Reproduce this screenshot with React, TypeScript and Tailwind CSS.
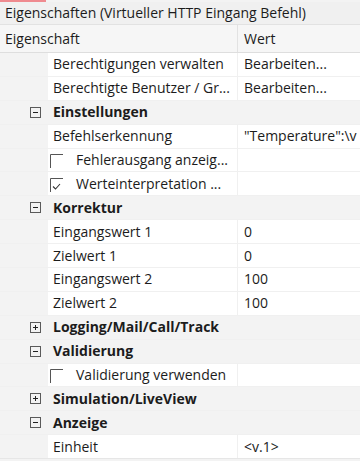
import React from 'react';

type Row =
  | { kind: 'cat'; label: string; open: boolean }
  | { kind: 'prop'; label: string; value?: string }
  | { kind: 'check'; label: string; checked: boolean };

const rows: Row[] = [
  { kind: 'prop', label: 'Berechtigungen verwalten', value: 'Bearbeiten...' },
  { kind: 'prop', label: 'Berechtigte Benutzer / Gr...', value: 'Bearbeiten...' },
  { kind: 'cat', label: 'Einstellungen', open: true },
  { kind: 'prop', label: 'Befehlserkennung', value: '"Temperature":\\v' },
  { kind: 'check', label: 'Fehlerausgang anzeig...', checked: false },
  { kind: 'check', label: 'Werteinterpretation ...', checked: true },
  { kind: 'cat', label: 'Korrektur', open: true },
  { kind: 'prop', label: 'Eingangswert 1', value: '0' },
  { kind: 'prop', label: 'Zielwert 1', value: '0' },
  { kind: 'prop', label: 'Eingangswert 2', value: '100' },
  { kind: 'prop', label: 'Zielwert 2', value: '100' },
  { kind: 'cat', label: 'Logging/Mail/Call/Track', open: false },
  { kind: 'cat', label: 'Validierung', open: true },
  { kind: 'check', label: 'Validierung verwenden', checked: false },
  { kind: 'cat', label: 'Simulation/LiveView', open: false },
  { kind: 'cat', label: 'Anzeige', open: true },
  { kind: 'prop', label: 'Einheit', value: '<v.1>' },
];

function ExpandBox({ open }: { open: boolean }) {
  return (
    <svg width="11" height="11" viewBox="0 0 11 11" className="shrink-0">
      <rect x="0.5" y="0.5" width="10" height="10" fill="none" stroke="#5a5a5a" />
      <path d="M3 5.5h5" stroke="#222" />
      {!open && <path d="M5.5 3v5" stroke="#222" />}
    </svg>
  );
}

function CheckCorner({ checked }: { checked: boolean }) {
  return (
    <svg width="14" height="14" viewBox="0 0 14 14" className="shrink-0">
      <path d="M0.5 14V0.5H13" fill="none" stroke="#555" />
      {checked && <path d="M3 8.5l2.5 2.5 4.5-5" fill="none" stroke="#333" strokeWidth="1.1" />}
    </svg>
  );
}

function PropertyRow({ row }: { row: Row }) {
  if (row.kind === 'cat') {
    return (
      <div className="flex h-[22.9px] items-center bg-[#f3f3f3]">
        <div className="flex w-[48px] justify-end pr-[7px]">
          <ExpandBox open={row.open} />
        </div>
        <span className="pl-[5px] font-bold">{row.label}</span>
      </div>
    );
  }
  return (
    <div className="flex h-[22.9px] items-center">
      <div className="h-full w-[48px] shrink-0 bg-[#f3f3f3]" />
      <div className="flex h-full w-[189px] shrink-0 items-center overflow-hidden whitespace-nowrap bg-white pl-[5px]">
        {row.kind === 'check' ? (
          <>
            <div className="-ml-[3px] mt-[2px] flex">
              <CheckCorner checked={row.checked} />
            </div>
            <span className="pl-[12px]">{row.label}</span>
          </>
        ) : (
          <span>{row.label}</span>
        )}
      </div>
      <div className="h-full w-px shrink-0 bg-[#f0f0f0]" />
      <div className="flex h-full flex-1 items-center overflow-hidden whitespace-nowrap bg-white pl-[6px]">
        {row.kind === 'prop' ? row.value : ''}
      </div>
    </div>
  );
}

export default function App() {
  return (
    <div
      className="h-[461px] w-[360px] overflow-hidden bg-[#f3f3f3] text-[14px] leading-none text-[#1c1c1c]"
      style={{ fontFamily: '"Open Sans", "Noto Sans", sans-serif' }}
    >
      <div className="h-[2px] w-[46px] bg-[#ef8a8f]" />
      <div className="flex h-[23px] items-center border-b border-[#e2e2e2] bg-[#f0f0f0] pl-[5px]">
        Eigenschaften (Virtueller HTTP Eingang Befehl)
      </div>
      <div className="flex h-[28px] border-b border-[#dedede] bg-[#f6f6f6]">
        <div className="flex w-[237px] items-center pl-[5px]">Eigenschaft</div>
        <div className="w-px bg-[#e2e2e2]" />
        <div className="flex flex-1 items-center pl-[6px]">Wert</div>
      </div>
      <div className="flex flex-col gap-px border-b border-[#e6e6e6] bg-[#f0f0f0]">
        {rows.map((r, i) => (
          <PropertyRow key={i} row={r} />
        ))}
      </div>
    </div>
  );
}
